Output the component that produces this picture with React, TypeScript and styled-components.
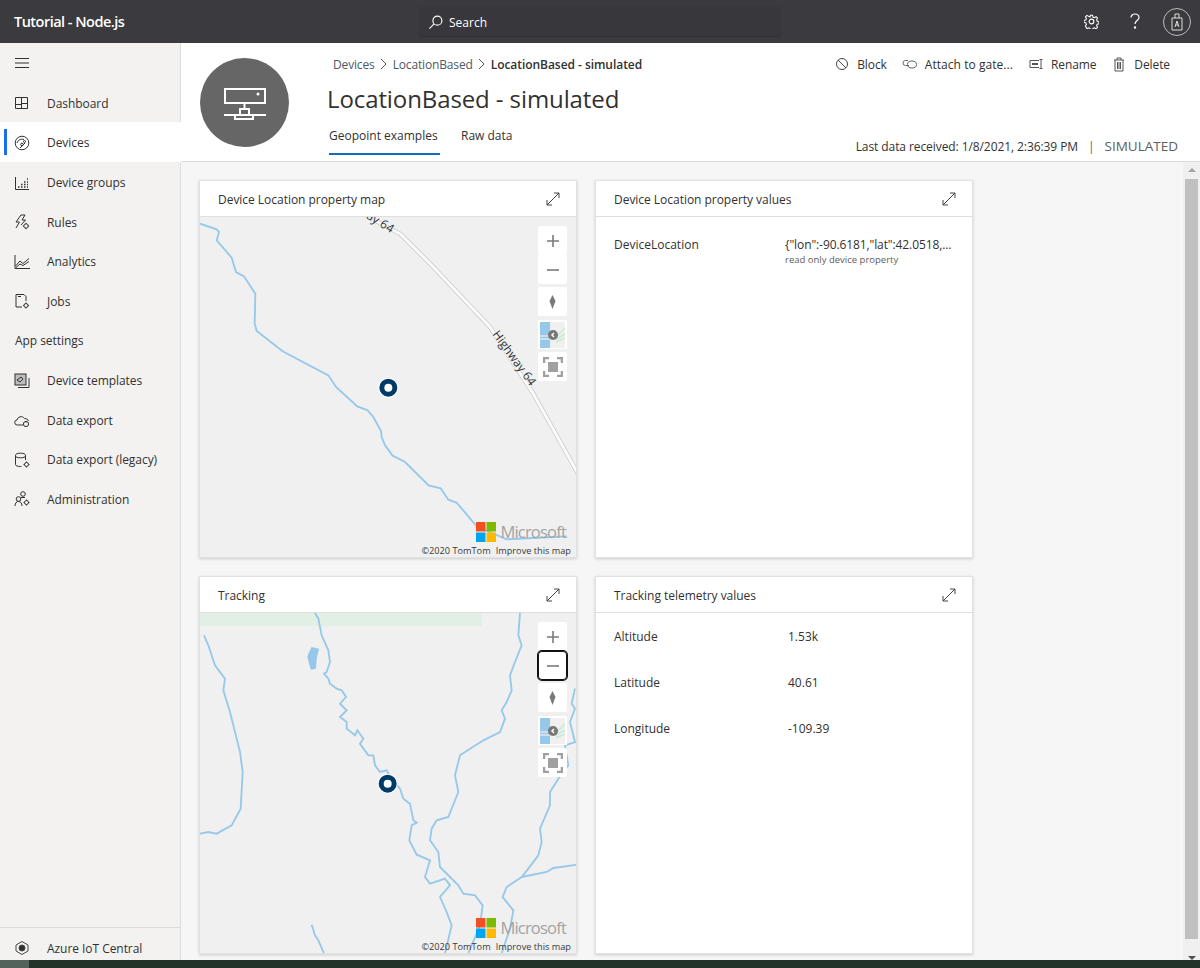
import React from "react";
import styled, { createGlobalStyle } from "styled-components";

const Global = createGlobalStyle`
  html, body { margin: 0; padding: 0; height: 100%; overflow: hidden; }
  body { font-family: "Open Sans", "Noto Sans", sans-serif; color: #323130; }
  * { box-sizing: border-box; }
`;

const Page = styled.div`
  width: 1200px; height: 968px; display: flex; flex-direction: column; overflow: hidden;
`;
const TopBar = styled.header`
  height: 43px; flex: none; background: #3b3a3e; display: flex; align-items: center; color: #fff; position: relative; padding: 0 14px;
`;
const AppName = styled.div`
  font-size: 14.5px; font-weight: 600; letter-spacing: -0.52px; width: 406px; flex: none;
`;
const SearchBox = styled.div`
  width: 360px; height: 29px; background: #38373b; border-radius: 2px; box-shadow: 0 1px 2px rgba(0,0,0,.2); display: flex; align-items: center; gap: 6px; padding: 1px 8px 0; font-size: 12px; flex: none; color: #fff;
`;
const TopIcons = styled.div`
  margin-left: auto; display: flex; align-items: center; margin-right: -5px;
`;
const TopIcon = styled.div`
  width: 43px; display: flex; justify-content: center; align-items: center;
`;
const Avatar = styled.div`
  width: 28px; height: 28px; border-radius: 50%; border: 1px solid #bdbdbd; display: flex; align-items: center; justify-content: center; margin-left: 7px;
`;
const Body = styled.div`
  flex: 1; display: flex; min-height: 0;
`;
const Sidebar = styled.nav`
  width: 181px; flex: none; background: #f3f2f1; border-right: 1px solid #dcdbda; display: flex; flex-direction: column; font-size: 12px;
`;
const Burger = styled.div`
  height: 40.6px; display: flex; align-items: center; padding-left: 14px; flex: none;
`;
const NavItem = styled.div<{ $active?: boolean }>`
  height: 39.6px; flex: none; display: flex; align-items: center; position: relative; background: ${p => p.$active ? "#fff" : "transparent"};
  padding-left: 14px; gap: 17px; color: #323130; margin-right: -1px; letter-spacing: -0.05px;
  ${p => p.$active ? `box-shadow: 0 -1px 0 #fff, inset 0 -1px 0 #f3f2f1; &::before { content: ""; position: absolute; left: 4px; top: 6px; bottom: 8px; width: 3px; background: #1a6ff0; }` : ""}
`;
const NavIconBox = styled.span`
  width: 16px; height: 16px; display: flex; flex: none;
`;
const NavHeading = styled.div`
  height: 39.6px; flex: none; display: flex; align-items: center; padding-left: 15px; letter-spacing: -0.05px;
`;
const SidebarFooter = styled.div`
  margin-top: auto; height: 33px; border-top: 1px solid #dcdbda; display: flex; align-items: center; padding: 8px 0 0 14px; gap: 17px; flex: none; letter-spacing: -0.05px;
`;
const Main = styled.main`
  flex: 1; min-width: 0; display: flex; flex-direction: column;
`;
const Header = styled.div`
  height: 119px; flex: none; background: #fff; border-bottom: 1px solid #dcdcdc; display: flex; padding: 15px 22px 0 19px;
`;
const DeviceBadge = styled.div`
  width: 89px; height: 89px; border-radius: 50%; background: #666; flex: none; display: flex; align-items: center; justify-content: center; padding-top: 3px;
`;
const HeaderBody = styled.div`
  flex: 1; margin-left: 38px; display: flex; flex-direction: column; min-width: 0;
`;
const TopLine = styled.div`
  display: flex; justify-content: space-between; align-items: center; height: 14px; margin-top: -1px;
`;
const Crumbs = styled.div`
  display: flex; align-items: center; gap: 4px; font-size: 12px; color: #4c5a66; letter-spacing: -0.15px; margin-left: 6px;
`;
const CrumbStrong = styled.span`
  color: #323130; font-weight: 600; letter-spacing: -0.05px;
`;
const Actions = styled.div`
  display: flex; align-items: center; font-size: 12px; color: #323130; letter-spacing: -0.1px; margin-right: 8px;
`;
const Action = styled.div<{ $gap: number; $ml: number; $ls?: number }>`
  display: flex; align-items: center; gap: ${p => p.$gap}px; margin-left: ${p => p.$ml}px; white-space: nowrap; letter-spacing: ${p => p.$ls ?? -0.1}px;
`;
const Title = styled.h1`
  margin: 13px 0 0 0; font-size: 24px; line-height: 30px; font-weight: 400; color: #323130; letter-spacing: -0.1px;
`;
const TabLine = styled.div`
  display: flex; align-items: flex-start; margin-top: 9px; justify-content: space-between; margin-left: 2px;
`;
const Tabs = styled.div`
  display: flex; gap: 21px; font-size: 12px; letter-spacing: 0;
`;
const Tab = styled.div<{ $active?: boolean }>`
  height: 32px; padding-top: 4px; color: #323130; white-space: nowrap; font-weight: ${p => p.$active ? 500 : 400};
  ${p => p.$active ? "border-bottom: 2px solid #106ebe; width: 111px;" : ""}
`;
const Status = styled.div`
  display: flex; align-items: center; font-size: 12px; letter-spacing: -0.08px; margin-top: 14px; color: #323130; white-space: nowrap;
`;
const Sep = styled.span`
  margin: 0 10px; color: #605e5c;
`;
const Sim = styled.span`
  color: #605e5c; font-size: 13.5px; letter-spacing: 0;
`;
const Workspace = styled.div`
  flex: 1; min-height: 0; background: #f6f6f6; display: flex;
`;
const CardGrid = styled.div`
  flex: 1; display: grid; grid-template-columns: 378px 378px; grid-template-rows: 378px 378px; gap: 18px; padding: 18px 0 0 18px;
`;
const Card = styled.section`
  background: #fff; border: 1px solid #e2e2e2; box-shadow: 0 1px 3px rgba(0,0,0,.18); display: flex; flex-direction: column; overflow: hidden;
`;
const CardHead = styled.div`
  height: 36px; flex: none; border-bottom: 1px solid #dedede; display: flex; align-items: center; justify-content: space-between; padding: 1px 16px 0 18px; font-size: 12px; letter-spacing: -0.03px; font-weight: 500;
`;
const MapArea = styled.div`
  flex: 1; position: relative; background: #f0f0f0; overflow: hidden;
`;
const MapSvg = styled.svg`
  display: block; width: 100%; height: 100%;
`;
const MapControls = styled.div`
  position: absolute; top: 9px; right: 9px; width: 29px; display: flex; flex-direction: column;
`;
const Ctl = styled.div<{ $mt?: number; $focus?: boolean }>`
  width: 29px; height: 29px; background: #fff; border-radius: 2px; display: flex; align-items: center; justify-content: center; margin-top: ${p => p.$mt ?? 0}px;
  ${p => p.$focus ? "box-shadow: inset 0 0 0 1px #111, 0 0 0 1px #111; border-radius: 4px;" : ""}
`;
const Brand = styled.div`
  position: absolute; right: 10px; bottom: 14px; display: flex; align-items: center; gap: 4px; color: #a3a3a3; font-size: 16.5px; font-weight: 500; letter-spacing: -0.8px;
`;
const MsLogo = styled.svg`
  display: block; width: 20px; height: 20px;
`;
const Attribution = styled.div`
  position: absolute; right: 5px; bottom: 0; font-size: 9.2px; color: #3a3a3a; display: flex; gap: 5px; white-space: nowrap;
`;
const ValueList = styled.div<{ $top: number }>`
  padding: ${p => p.$top}px 18px 0; display: flex; flex-direction: column; font-size: 12px;
`;
const ValueRow = styled.div`
  display: grid; grid-template-columns: 174px 1fr; height: 46px; letter-spacing: 0;
`;
const PropName = styled.div`
  font-weight: 500;
`;
const PropValue = styled.div`
  display: flex; flex-direction: column; font-size: 12px; letter-spacing: 0; color: #323130; white-space: nowrap;
`;
const DeviceValue = styled(PropValue)`
  margin-left: -3px; letter-spacing: -0.1px;
`;
const PropNote = styled.span`
  font-size: 9.5px; color: #605e5c; margin-top: 0; letter-spacing: 0;
`;
const ScrollBar = styled.div`
  width: 17px; flex: none; background: #f0f0f0; display: flex; flex-direction: column; align-items: center;
`;
const Arrow = styled.div<{ $down?: boolean }>`
  width: 0; height: 0; border-left: 4px solid transparent; border-right: 4px solid transparent; flex: none;
  ${p => p.$down ? "border-top: 4px solid #505050; margin-top: 17px;" : "border-bottom: 4px solid #a3a3a3; margin-top: 6px;"}
`;
const Thumb = styled.div`
  width: 13px; height: 760px; flex: none; background: #c0c0c0; margin-top: 7px;
`;
const BottomStrip = styled.div`
  height: 8px; flex: none; background: #233329; display: flex;
`;
const StripLeft = styled.div`
  width: 29px; background: #53625b;
`;

const I = ({ children, w = 16, h = 16, c = "#323130", vb = "0 0 16 16", sw = 1 }: any) => (
  <svg width={w} height={h} viewBox={vb} fill="none" stroke={c} strokeWidth={sw} style={{ display: "block", flex: "none" }}>{children}</svg>
);

const Expand = () => (
  <I w={14} h={14} vb="0 0 14 14" c="#444">
    <path d="M1 13 13 1M8 1h5v5M1 8v5h5" />
  </I>
);

const icons: Record<string, React.ReactNode> = {
  dash: <I><path d="M1.500 2.500h12v11h-12zM7.500 2.500v11M7.500 8.500h6M1.500 9.500h6" /></I>,
  devices: <I><circle cx="8" cy="8" r="6.800" /><path d="M3 8c1-3 4-4.500 7-3.500M6 13l5-5" /><circle cx="8" cy="9.500" r="1.300" /><circle cx="10.500" cy="6.500" r="1" /></I>,
  groups: <I><path d="M1.500 2v12.500H15" /><path d="M4 12h1.500M7 12h1.500M7 9.500h1.500M10 12h1.500M10 9.500h1.500M10 7h1.500M13 12h1M13 9.500h1M13 7h1M13 4h1" strokeWidth="1.500" /></I>,
  rules: <I><path d="M7 1 2 8h3.500L2 14M7 1h4L8 6h3.500L7 11" /><circle cx="12" cy="12" r="2.200" /><path d="M12 8.800v1M12 14.200v1M8.800 12h1M14.200 12h1" /></I>,
  analytics: <I><path d="M1 1v13.500h15" /><path d="M1.500 12 6 7l3 2.500 6-5M2 13.500 6 10l3 1.500 6-4" /></I>,
  jobs: <I><path d="M2 1.500h8l2 2V8M2 1.500V14h6" /><path d="M4 3.500h3" /><circle cx="12" cy="12.500" r="2" /><path d="M12 9.500v1M12 14.500v1M9 12.500h1M14 12.500h1" /></I>,
  templates: <I><rect x="1" y="1" width="11" height="11" fill="#bdbdbd" /><path d="M4 14.500h11V5M3 7l4-3 2 2-3 3z" /></I>,
  exportI: <I><path d="M5 13H3.500a2.500 2.500 0 0 1-.5-5c.5-3 5-5 7.500-1.500 2 0 3.500 1 4 2.500" /><path d="M5 13h4" /><circle cx="12" cy="12" r="2.600" /><path d="M12 9v1.500" /></I>,
  legacy: <I><ellipse cx="6.500" cy="3.500" rx="5" ry="2.300" /><path d="M1.500 3.500V12.500c0 1.300 2 2 5 2h1M11.500 3.500V8" /><circle cx="12.500" cy="12.500" r="2" /><path d="M12.500 9.500v1M12.500 14.500v1M9.500 12.500h1M14.500 12.500h1" /></I>,
  admin: <I><circle cx="9" cy="3" r="2.300" /><circle cx="4.500" cy="8" r="2.300" /><path d="M1 15c0-3 1.500-4.500 3.500-4.500S8 12 8 15M7 6.500h4" /><circle cx="12.500" cy="11.500" r="2" /><path d="M12.500 8.500v1M12.500 13.500v1M9.500 11.500h1M14.500 11.500h1" /></I>,
  azure: <I c="#444"><path d="M8 1.500 14 5v6l-6 3.500L2 11V5z" /><circle cx="8" cy="8" r="3" fill="#323130" /></I>,
};

const Nav = ({ icon, label, active }: { icon: string; label: string; active?: boolean }) => (
  <NavItem $active={active}><NavIconBox>{icons[icon]}</NavIconBox><span>{label}</span></NavItem>
);

const line = (pts: number[][]) => pts.map(p => p.join(",")).join(" ");

const RIVER = "#96c8ea";

const river1 = [[0,130],[50,147],[57,155],[50,180],[95,232],[108,275],[132,288],[166,340],[164,430],[170,452],[248,513],[385,585],[408,620],[472,678],[503,690],[520,710],[543,752],[545,770],[555,795],[578,826],[615,845],[686,915],[722,924],[745,958],[770,967],[830,1038],[880,1060],[920,1077],[1000,1073],[1100,1068]];
const highway = [[490,100],[560,140],[600,160],[700,260],[870,440],[1000,640],[1134,880]];

const tracks = [
  [[345,113],[355,130],[365,180],[385,225],[390,260],[380,290],[372,295],[385,310],[390,325],[410,340],[425,345],[438,365],[420,385],[440,405],[420,425],[440,440],[440,460],[465,480],[472,465],[490,490],[480,505],[505,540],[520,540],[525,570],[540,590],[560,585],[575,610],[600,640],[610,670],[630,685],[640,735],[650,742],[635,750],[628,795],[650,838],[690,855],[675,905],[690,925],[735,910],[750,930],[720,965],[740,1010],[755,1050],[735,1134]],
  [[12,180],[25,210],[45,270],[75,310],[70,345],[90,410],[120,530],[128,590],[122,700],[95,750],[50,775],[25,770],[0,775]],
  [[960,113],[955,180],[965,210],[945,260],[930,300],[935,345],[920,380],[905,405],[915,430],[900,470],[850,495],[780,540],[765,600],[775,650],[745,725],[710,735],[695,760],[690,795],[715,830],[720,875],[775,930],[790,955],[825,960],[848,990],[840,1050],[805,1134]],
  [[1125,340],[1115,385],[1125,400],[1110,440],[1125,500],[1095,510],[1105,570],[1075,610],[1050,650],[1050,690],[1020,760],[1025,800],[1015,840],[985,880],[965,905],[920,935],[908,965],[940,1005],[930,1060],[905,1134]],
  [[965,905],[1040,890],[1060,878],[1134,868]],
  [[335,1048],[345,1080],[355,1095],[372,1134]],
];

const Marker = ({ x, y }: { x: number; y: number }) => (
  <g>
    <circle cx={x} cy={y} r="30" fill="#fff" />
    <circle cx={x} cy={y} r="19.500" fill="#fff" stroke="#003a66" strokeWidth="15" />
  </g>
);

const DeviceMap = () => (
  <MapSvg viewBox="0 110 1128 1020" preserveAspectRatio="none">
    <polyline points={line(river1)} fill="none" stroke={RIVER} strokeWidth="5.500" />
    <polyline points={line(highway)} fill="none" stroke="#c4c4c4" strokeWidth="13" />
    <polyline points={line(highway)} fill="none" stroke="#fbfbfb" strokeWidth="9" />
    <text transform="translate(876,462) rotate(54)" fontSize="36" fill="#333" fontFamily="Open Sans, sans-serif" stroke="#f0f0f0" strokeWidth="6" paintOrder="stroke">Highway 64</text>
    <text transform="translate(497,112) rotate(32)" fontSize="36" fill="#333" fontFamily="Open Sans, sans-serif" stroke="#f0f0f0" strokeWidth="6" paintOrder="stroke">ay 64</text>
    <Marker x={565} y={622} />
  </MapSvg>
);

const TrackMap = () => (
  <MapSvg viewBox="0 113 1128 1020" preserveAspectRatio="none">
    <rect x="0" y="113" width="846" height="39" fill="#e2efe5" />
    <polygon points="325,235 335,215 357,220 350,250 348,280 332,283 322,245" fill={RIVER} />
    {tracks.map((t, i) => <polyline key={i} points={line(t)} fill="none" stroke={RIVER} strokeWidth="5.500" />)}
    <Marker x={563} y={625} />
  </MapSvg>
);

const StyleThumb = () => (
  <svg width="29" height="29" viewBox="0 0 29 29" style={{ display: "block" }}>
    <rect width="29" height="29" fill="#fff" />
    <rect x="2" y="2" width="25" height="26" fill="#f0f0f0" />
    <rect x="2" y="2" width="10" height="26" fill="#96c8ea" />
    <path d="M2 16h10M2 19h10" stroke="#dfe6ea" strokeWidth="1.500" />
    <path d="M17 18 27 8M17 20l10-6M18 22l9-4" stroke="#cfe8d5" strokeWidth="1.500" />
    <circle cx="15" cy="15" r="5" fill="#777" />
    <path d="M16 13l-2 2 2 2" stroke="#fff" strokeWidth="1.500" fill="none" />
  </svg>
);

const Controls = ({ focus }: { focus?: boolean }) => (
  <MapControls>
    <Ctl><I w={14} h={14} vb="0 0 14 14" c="#7a7a7a" sw={1.6}><path d="M7 1v12M1 7h12" /></I></Ctl>
    <Ctl $focus={focus}><I w={14} h={14} vb="0 0 14 14" c="#7a7a7a" sw={1.6}><path d="M1 7h12" /></I></Ctl>
    <Ctl $mt={3}><svg width="7" height="14" viewBox="0 0 7 14" style={{ display: "block" }}><path d="M3.500 0 6.500 6 3.500 14 .5 6z" fill="#7a7a7a" /></svg></Ctl>
    <Ctl $mt={4}><StyleThumb /></Ctl>
    <Ctl $mt={3}><svg width="20" height="20" viewBox="0 0 20 20" style={{ display: "block" }}><path d="M1 6V1h5M14 1h5v5M19 14v5h-5M6 19H1v-5" fill="none" stroke="#a0a0a0" strokeWidth="2.500" /><rect x="5" y="5" width="10" height="10" fill="#a0a0a0" /></svg></Ctl>
  </MapControls>
);

const Branding = () => (
  <>
    <Brand>
      <MsLogo viewBox="0 0 20 20">
        <rect width="9.500" height="9.500" fill="#f25022" />
        <rect x="10.500" width="9.500" height="9.500" fill="#7fba00" />
        <rect y="10.500" width="9.500" height="9.500" fill="#00a4ef" />
        <rect x="10.500" y="10.500" width="9.500" height="9.500" fill="#ffb900" />
      </MsLogo>
      <span>Microsoft</span>
    </Brand>
    <Attribution><span>©2020 TomTom</span><span>Improve this map</span></Attribution>
  </>
);

export default function App() {
  return (
    <Page>
      <Global />
      <TopBar>
        <AppName>Tutorial - Node.js</AppName>
        <SearchBox>
          <I w={15} h={15} vb="0 0 16 16" c="#fff" sw={1.2}><circle cx="10" cy="6" r="4.800" /><path d="M6.500 9.500 1.500 14.500" /></I>
          <span>Search</span>
        </SearchBox>
        <TopIcons>
          <TopIcon>
            <I w={15} h={15} vb="0 0 16 16" c="#fff" sw={1.2}><circle cx="8" cy="8" r="2.500" /><path d="M6.800 1h2.400l.4 2 1.700.7 1.800-1.100 1.700 1.700-1.100 1.800.7 1.700 2 .4v2.400l-2 .4-.7 1.700 1.100 1.800-1.700 1.700-1.800-1.100-1.700.7-.4 2H6.800l-.4-2-1.700-.7-1.800 1.100L1.200 13l1.100-1.800-.7-1.700-2-.4V6.700l2-.4.7-1.700L1.200 2.800l1.700-1.700 1.800 1.100L6.400 3z" transform="translate(.4 .4) scale(.95)" /></I>
          </TopIcon>
          <TopIcon><I w={12} h={17} vb="0 0 12 17" c="#fff" sw={1.2}><path d="M2 4.500C2 2.500 3.800 1 6 1s4 1.500 4 3.500c0 3-4 3-4 6.500" /><circle cx="6" cy="14.500" r=".6" fill="#fff" /></I></TopIcon>
          <Avatar>
            <I w={12} h={18} vb="0 0 12 18" c="#ddd"><path d="M1 5h10v12H1zM4 5V1M8 5V1M4 1h4" /><path d="M4 14l2-6 2 6M4.800 12h2.400" /></I>
          </Avatar>
        </TopIcons>
      </TopBar>
      <Body>
        <Sidebar>
          <Burger><I w={16} h={12} vb="0 0 16 12" c="#323130"><path d="M1 1.500h14M1 6h14M1 10.500h14" /></I></Burger>
          <Nav icon="dash" label="Dashboard" />
          <Nav icon="devices" label="Devices" active />
          <Nav icon="groups" label="Device groups" />
          <Nav icon="rules" label="Rules" />
          <Nav icon="analytics" label="Analytics" />
          <Nav icon="jobs" label="Jobs" />
          <NavHeading>App settings</NavHeading>
          <Nav icon="templates" label="Device templates" />
          <Nav icon="exportI" label="Data export" />
          <Nav icon="legacy" label="Data export (legacy)" />
          <Nav icon="admin" label="Administration" />
          <SidebarFooter><NavIconBox>{icons.azure}</NavIconBox><span>Azure IoT Central</span></SidebarFooter>
        </Sidebar>
        <Main>
          <Header>
            <DeviceBadge>
              <svg width="42" height="32" viewBox="0 0 42 32" fill="none" stroke="#fff" strokeWidth="2" style={{ display: "block" }}>
                <rect x="1" y="1" width="40" height="14" />
                <circle cx="34" cy="6" r="1.500" fill="#fff" stroke="none" />
                <path d="M20.500 15v6M16 27v-6h9v6M11 27h18v4H11zM0 27h11M29 27h13" />
              </svg>
            </DeviceBadge>
            <HeaderBody>
              <TopLine>
                <Crumbs>
                  <span>Devices</span>
                  <I w={10} h={12} vb="0 0 10 12" c="#555"><path d="M2 1l5 5-5 5" /></I>
                  <span>LocationBased</span>
                  <I w={10} h={12} vb="0 0 10 12" c="#555"><path d="M2 1l5 5-5 5" /></I>
                  <CrumbStrong>LocationBased - simulated</CrumbStrong>
                </Crumbs>
                <Actions>
                  <Action $gap={9} $ml={0}><I w={12} h={12} vb="0 0 12 12" c="#444"><circle cx="6" cy="6" r="5.500" /><path d="M2 2l8 8" /></I>Block</Action>
                  <Action $gap={8} $ml={15} $ls={0.05}><I w={15} h={10} vb="0 0 15 10" c="#666"><path d="M6 1.500H3.500a2.500 2.500 0 0 0 0 5H7" /><ellipse cx="10" cy="5.500" rx="4.500" ry="3.500" /></I>Attach to gate...</Action>
                  <Action $gap={7} $ml={16}><I w={15} h={10} vb="0 0 15 10" c="#555"><path d="M10 1.500H1v7h9" /><path d="M3 5h6" strokeWidth="2" /><path d="M12 0v10M10.500.5h3M10.500 9.500h3" /></I>Rename</Action>
                  <Action $gap={9} $ml={17}><I w={12} h={15} vb="0 0 12 15" c="#555"><path d="M1 3h10M4 3V1h4v2M2 3v11h8V3M4.500 5v7M6 5v7M7.500 5v7" /></I>Delete</Action>
                </Actions>
              </TopLine>
              <Title>LocationBased - simulated</Title>
              <TabLine>
                <Tabs>
                  <Tab $active>Geopoint examples</Tab>
                  <Tab>Raw data</Tab>
                </Tabs>
                <Status>Last data received: 1/8/2021, 2:36:39 PM<Sep>|</Sep><Sim>SIMULATED</Sim></Status>
              </TabLine>
            </HeaderBody>
          </Header>
          <Workspace>
            <CardGrid>
              <Card>
                <CardHead>Device Location property map<Expand /></CardHead>
                <MapArea><DeviceMap /><Controls /><Branding /></MapArea>
              </Card>
              <Card>
                <CardHead>Device Location property values<Expand /></CardHead>
                <ValueList $top={19}>
                  <ValueRow>
                    <PropName>DeviceLocation</PropName>
                    <DeviceValue>{`{"lon":-90.6181,"lat":42.0518,...`}<PropNote>read only device property</PropNote></DeviceValue>
                  </ValueRow>
                </ValueList>
              </Card>
              <Card>
                <CardHead>Tracking<Expand /></CardHead>
                <MapArea><TrackMap /><Controls focus /><Branding /></MapArea>
              </Card>
              <Card>
                <CardHead>Tracking telemetry values<Expand /></CardHead>
                <ValueList $top={15}>
                  <ValueRow><PropName>Altitude</PropName><PropValue>1.53k</PropValue></ValueRow>
                  <ValueRow><PropName>Latitude</PropName><PropValue>40.61</PropValue></ValueRow>
                  <ValueRow><PropName>Longitude</PropName><PropValue>-109.39</PropValue></ValueRow>
                </ValueList>
              </Card>
            </CardGrid>
            <ScrollBar>
              <Arrow />
              <Thumb />
              <Arrow $down />
            </ScrollBar>
          </Workspace>
        </Main>
      </Body>
      <BottomStrip><StripLeft /></BottomStrip>
    </Page>
  );
}
